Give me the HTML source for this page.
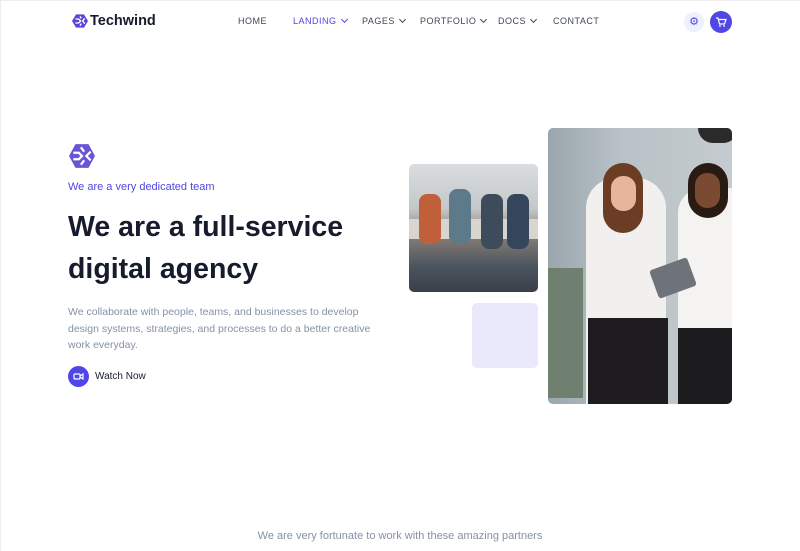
<!DOCTYPE html>
<html><head><style>
*{margin:0;padding:0;box-sizing:border-box}
body{width:800px;height:550px;overflow:hidden;background:#fff;font-family:"Liberation Sans",sans-serif;position:relative}
body:before{content:"";position:absolute;left:0;top:0;width:800px;height:550px;border-top:1px solid #eee;border-left:1px solid #eee}
.a{position:absolute}
.nav{font-size:9px;letter-spacing:.5px;color:#3c4858;top:16px}
.chev{display:inline-block;width:5px;height:5px;border-right:1.3px solid currentColor;border-bottom:1.3px solid currentColor;transform:rotate(45deg);margin-left:5px;position:relative;top:-2px}
</style></head><body>
<svg class="a" style="left:72px;top:13px" width="16" height="16" viewBox="0 0 24 24"><path d="M6 2h12l6 10-6 10H6L0 12z" fill="#5a45d8"/><path d="M5 9h5l3 3-3 3H5M19 8l-3 4 3 4M12 5l2 3M12 19l2-3" stroke="#fff" stroke-width="2" fill="none"/></svg>
<div class="a" style="left:90px;top:13px;font-size:14.5px;font-weight:bold;color:#161c2d">Techwind</div>
<div class="a nav" style="left:238px">HOME</div>
<div class="a nav" style="left:293px;color:#4f46e5">LANDING<span class="chev"></span></div>
<div class="a nav" style="left:362px">PAGES<span class="chev"></span></div>
<div class="a nav" style="left:420px">PORTFOLIO<span class="chev"></span></div>
<div class="a nav" style="left:498px">DOCS<span class="chev"></span></div>
<div class="a nav" style="left:553px">CONTACT</div>
<div class="a" style="left:684px;top:12px;width:20px;height:20px;border-radius:50%;background:#eef0fb;color:#4f46e5;font-size:11px;text-align:center;line-height:20px">⚙</div>
<div class="a" style="left:710px;top:11px;width:22px;height:22px;border-radius:50%;background:#4f46e5"><svg width="22" height="22" viewBox="0 0 22 22"><path d="M6 7h2l1.5 6h5l1.5-4.5H9" stroke="#fff" stroke-width="1.2" fill="none"/><circle cx="10" cy="15" r=".9" fill="#fff"/><circle cx="14" cy="15" r=".9" fill="#fff"/></svg></div>

<svg class="a" style="left:68px;top:143px" width="28" height="26" viewBox="0 0 24 24"><path d="M6 1h12l6 11-6 11H6L0 12z" fill="#6b55d6"/><path d="M4 9h5l3 3-3 3H4M20 8l-4 4 4 4M11 4l3 4M11 20l3-4" stroke="#fff" stroke-width="2" fill="none"/></svg>
<div class="a" style="left:68px;top:181px;font-size:11px;color:#4f46e5">We are a very dedicated team</div>
<div class="a" style="left:68px;top:206px;font-size:28.5px;font-weight:bold;color:#161c2d;line-height:42px">We are a full-service<br>digital agency</div>
<div class="a" style="left:68px;top:304px;font-size:10.5px;color:#8492a6;line-height:16.5px">We collaborate with people, teams, and businesses to develop<br>design systems, strategies, and processes to do a better creative<br>work everyday.</div>
<div class="a" style="left:68px;top:366px;width:21px;height:21px;border-radius:50%;background:#4f46e5"><svg width="21" height="21" viewBox="0 0 21 21"><rect x="6" y="8" width="6" height="5" rx="1" stroke="#fff" fill="none" stroke-width="1.2"/><path d="M12 10l3-2v5l-3-2" stroke="#fff" fill="none" stroke-width="1.2"/></svg></div>
<div class="a" style="left:95px;top:371px;font-size:10px;color:#161c2d">Watch Now</div>

<div class="a" style="left:409px;top:164px;width:129px;height:128px;border-radius:5px;overflow:hidden;background:linear-gradient(180deg,#d9dde0 0%,#c4c8c9 35%,#8c7f74 55%,#4a5560 80%,#3a4048 100%)">
<div class="a" style="left:0;top:55px;width:129px;height:20px;background:#d8d4ce"></div>
<div class="a" style="left:10px;top:30px;width:22px;height:50px;background:#c0603a;border-radius:8px"></div>
<div class="a" style="left:40px;top:25px;width:22px;height:55px;background:#5c7a8a;border-radius:8px"></div>
<div class="a" style="left:72px;top:30px;width:22px;height:55px;background:#3e4b5a;border-radius:8px"></div>
<div class="a" style="left:98px;top:30px;width:22px;height:55px;background:#34465c;border-radius:8px"></div>
</div>
<div class="a" style="left:472px;top:303px;width:66px;height:65px;border-radius:5px;background:#eae8fb"></div>
<div class="a" style="left:548px;top:128px;width:184px;height:276px;border-radius:5px;overflow:hidden;background:linear-gradient(90deg,#9aa6ad 0%,#b9c2c7 40%,#c5cbce 100%)">
<div class="a" style="left:0;top:140px;width:35px;height:130px;background:#6f7f70"></div>
<div class="a" style="left:38px;top:50px;width:80px;height:230px;background:#f2f0ee;border-radius:30px 30px 0 0"></div>
<div class="a" style="left:55px;top:35px;width:40px;height:70px;background:#6b3d24;border-radius:20px"></div>
<div class="a" style="left:63px;top:48px;width:25px;height:35px;background:#e7b59a;border-radius:12px"></div>
<div class="a" style="left:40px;top:190px;width:80px;height:90px;background:#1e1c1e"></div>
<div class="a" style="left:130px;top:60px;width:60px;height:220px;background:#f5f3f1;border-radius:25px 0 0 0"></div>
<div class="a" style="left:140px;top:35px;width:40px;height:55px;background:#2a1a14;border-radius:20px"></div>
<div class="a" style="left:147px;top:45px;width:25px;height:35px;background:#7a4a32;border-radius:12px"></div>
<div class="a" style="left:130px;top:200px;width:60px;height:80px;background:#1c1b1d"></div>
<div class="a" style="left:105px;top:135px;width:40px;height:30px;background:#6d7378;transform:rotate(-20deg);border-radius:3px"></div>
<div class="a" style="left:150px;top:0;width:40px;height:15px;background:#2a2a2a;border-radius:0 0 20px 20px"></div>
</div>
<div class="a" style="left:0;top:530px;width:800px;text-align:center;font-size:11px;color:#8492a6">We are very fortunate to work with these amazing partners</div>
</body></html>
